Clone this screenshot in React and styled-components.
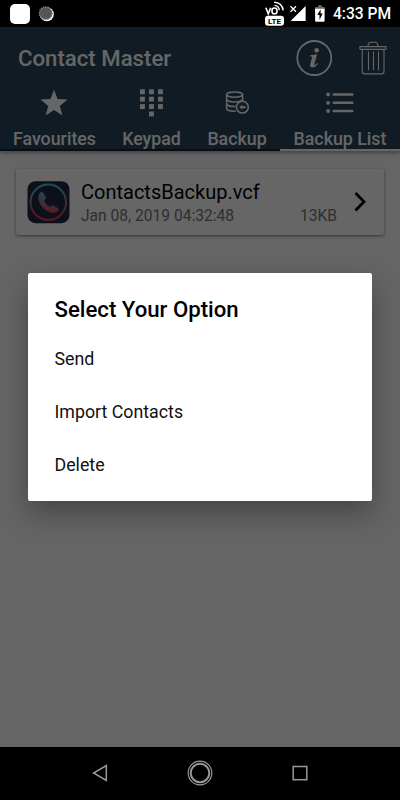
import { useState } from "react";
import styled, { createGlobalStyle } from "styled-components";

const GlobalStyle = createGlobalStyle`
  * {
    box-sizing: border-box;
  }

  body {
    margin: 0;
    background: #000;
    font-family: Roboto, "Liberation Sans", sans-serif;
  }
`;

const TABS = [
  { name: "Favourites", width: 109, icon: <StarIcon /> },
  { name: "Keypad", width: 85, icon: <KeypadIcon /> },
  { name: "Backup", width: 86, icon: <BackupIcon /> },
  { name: "Backup List", width: 120, icon: <ListIcon /> },
];

const OPTIONS = ["Send", "Import Contacts", "Delete"];

function StarIcon() {
  return (
    <svg width="30" height="28" viewBox="0 0 30 28">
      <path
        fill="currentColor"
        d="M14 .8l3.6 9.3 9.9.5-7.7 6.3 2.6 9.6L14 21.1l-8.4 5.4 2.6-9.6L.5 10.6l9.9-.5z"
      />
    </svg>
  );
}

function KeypadIcon() {
  const dots = [];
  for (let row = 0; row < 3; row++) {
    for (let col = 0; col < 3; col++) {
      dots.push([col * 9, row * 7.4]);
    }
  }
  dots.push([9, 22.2]);
  return (
    <svg width="23" height="28" viewBox="0 0 23 28">
      {dots.map(([x, y]) => (
        <rect key={`${x}-${y}`} x={x} y={y + 0.3} width="4.9" height="4.9" fill="currentColor" />
      ))}
    </svg>
  );
}

function BackupIcon() {
  return (
    <svg width="24" height="24" viewBox="0 0 24 24" fill="none" stroke="currentColor" strokeWidth="1.5">
      <ellipse cx="9.6" cy="3.6" rx="8" ry="2.7" />
      <path d="M1.600 3.600v14c0 1.500 3.700 2.700 8 2.700h1.200M17.600 3.600v6" />
      <path d="M1.600 8.200c0 1.500 3.700 2.700 8 2.700s8-1.200 8-2.700" />
      <path d="M1.600 12.900c0 1.500 3.700 2.700 8 2.700h1" />
      <circle cx="17.4" cy="16.200" r="5.900" />
      <path d="M20.600 16.200h-4" strokeWidth="2" />
      <path d="M17.300 13.800v4.800l-3-2.400z" fill="currentColor" stroke="none" />
    </svg>
  );
}

function ListIcon() {
  return (
    <svg width="28" height="22" viewBox="0 0 28 22">
      {[2.5, 10.8, 19].map((y) => (
        <g key={y} fill="currentColor">
          <circle cx="2.1" cy={y} r="1.9" />
          <rect x="6.5" y={y - 1.3} width="21" height="2.6" rx="1.2" />
        </g>
      ))}
    </svg>
  );
}

function InfoIcon() {
  return (
    <svg width="36" height="36" viewBox="0 0 36 36">
      <circle cx="18.3" cy="18" r="17" fill="none" stroke="currentColor" strokeWidth="1.8" />
      <circle cx="20.7" cy="10.2" r="2.3" fill="currentColor" />
      <path
        fill="currentColor"
        d="M14.200 15.300l6.900-1-2.700 9.800c-.3 1.200.2 1.400.8.900l2-2 .8.600c-1.700 2.600-3.400 4-5.400 4-2.200 0-3-1.400-2.400-3.600l1.700-6.200c.2-.9 0-1.300-.7-1.300h-1.300z"
      />
    </svg>
  );
}

function TrashIcon() {
  return (
    <svg width="28" height="34" viewBox="0 0 28 34" fill="none" stroke="currentColor" strokeWidth="1.1">
      <path d="M9 5.2c0-2.800 1.200-4 3-4h4c1.800 0 3 1.200 3 4" />
      <rect x=".8" y="5.600" width="26.400" height="2.800" rx=".8" />
      <path d="M3.200 8.500v21.700c0 1.800 1 2.700 2.600 2.700h16.600c1.600 0 2.600-.9 2.600-2.700V8.500" />
      <path d="M9.500 10.500v18.700M14.500 10.500v18.700M19.500 10.500v18.700" />
    </svg>
  );
}

function AppLogo() {
  return (
    <svg width="43" height="43" viewBox="0 0 43 43">
      <defs>
        <linearGradient id="ring" gradientUnits="userSpaceOnUse" x1="0" y1="4" x2="0" y2="39">
          <stop offset="0" stopColor="#48c0da" />
          <stop offset=".5" stopColor="#8e7e9c" />
          <stop offset=".8" stopColor="#dc3a56" />
        </linearGradient>
      </defs>
      <rect x=".5" y=".2" width="42" height="42" rx="8" fill="#202a44" />
      <circle cx="21.3" cy="21.2" r="17.7" fill="none" stroke="url(#ring)" strokeWidth="2" />
      <path
        fill="url(#ring)"
        d="M12.500 12.200c1.500-1.500 3-1.900 3.900-.5l2.300 4.100c.5 1 .2 2-.6 2.600l-1 .9c1 3 3.200 5.300 6.100 6.500l1.500-1c.8-.6 1.700-.6 2.500-.1l4 2.500c1.200.8.8 1.800-.4 2.900-2.300 2.100-6 2.400-9.500.6-4.900-2.400-8.800-7.200-9.700-12-.4-2.500-.3-5.100.9-6.500z"
      />
    </svg>
  );
}

function StatusIcons() {
  return (
    <svg width="62" height="27" viewBox="0 0 62 27">
      <g fill="none" stroke="#fff" strokeWidth="1.6">
        <path d="M.9 7.800l2.400 6 2.400-6" />
        <rect x="7" y="8" width="5" height="5.700" rx="2.300" />
        <path d="M9.500 5.400q4.300.2 4.900 4.800M9.200 2.200q8 .4 9 8.200" strokeWidth="1.400" />
      </g>
      <rect y="15.800" width="19" height="10" rx="3" fill="#fff" />
      <text x="9.500" y="23.700" textAnchor="middle" fontSize="8" fontWeight="700">
        LTE
      </text>
      <path fill="#fff" d="M40.600 6v15H25.600z" />
      <path fill="none" stroke="#000" strokeWidth="3.500" d="M31 5l-5.500 7" />
      <path fill="none" stroke="#fff" strokeWidth="1.300" d="M25.500 6.200l5.500 5.500M31 6.200l-5.500 5.500" />
      <path fill="#666" d="M53 5.200h4V7h2.600v5h-9.500V7H53z" />
      <path fill="#fff" d="M50.100 8.800h9.500v12a1 1 0 0 1-1 1h-7.500a1 1 0 0 1-1-1z" />
      <path fill="#000" d="M55.600 9.200l-3.300 5.700h2.200v5l3.200-6.300h-2.100z" />
    </svg>
  );
}

function App() {
  const [activeTab, setActiveTab] = useState("Backup List");

  return (
    <Phone>
      <GlobalStyle />
      <StatusBar>
        <Notices>
          <AppBadge />
          <svg width="16" height="16" viewBox="0 0 16 16">
            <circle cx="8.800" cy="8.300" r="7" fill="#fff" />
            <circle cx="7.800" cy="7.200" r="6.400" fill="#555" stroke="#888" strokeWidth="1.300" strokeDasharray="1.400 1" />
          </svg>
        </Notices>
        <StatusIcons />
        <Clock>4:33 PM</Clock>
      </StatusBar>

      <Screen>
        <Header>
          <Toolbar>
            <Title>Contact Master</Title>
            <InfoIcon />
            <TrashIcon />
          </Toolbar>
          <Tabs>
            {TABS.map((tab) => (
              <Tab
                key={tab.name}
                $width={tab.width}
                $active={tab.name === activeTab}
                onClick={() => setActiveTab(tab.name)}
              >
                <TabIcon>{tab.icon}</TabIcon>
                <TabName>{tab.name}</TabName>
              </Tab>
            ))}
          </Tabs>
        </Header>

        <FileCard>
          <AppLogo />
          <FileInfo>
            <FileName>ContactsBackup.vcf</FileName>
            <FileMeta>
              <span>Jan 08, 2019 04:32:48</span>
              <span>13KB</span>
            </FileMeta>
          </FileInfo>
          <svg width="14" height="22" viewBox="0 0 14 22">
            <path d="M2.500 2l8.500 8.700-8.500 8.700" fill="none" stroke="#000" strokeWidth="2.800" />
          </svg>
        </FileCard>

        <Overlay>
          <Dialog>
            <DialogTitle>Select Your Option</DialogTitle>
            {OPTIONS.map((option) => (
              <Option key={option}>{option}</Option>
            ))}
          </Dialog>
        </Overlay>
      </Screen>

      <NavBar>
        <svg width="16" height="18" viewBox="0 0 16 18">
          <path d="M14.300 1.600v14.800L1.600 9z" fill="none" stroke="#999" strokeWidth="1.500" />
        </svg>
        <svg width="26" height="26" viewBox="0 0 26 26" fill="none" stroke="#999">
          <circle cx="13" cy="13" r="11.800" strokeWidth="1.200" />
          <circle cx="13" cy="13" r="9.300" strokeWidth="2" />
        </svg>
        <svg width="16" height="16" viewBox="0 0 16 16">
          <rect x="1.200" y="1.500" width="13.600" height="13.200" fill="none" stroke="#999" strokeWidth="1.500" />
        </svg>
      </NavBar>
    </Phone>
  );
}

const Phone = styled.div`
  width: 400px;
  height: 800px;
  display: flex;
  flex-direction: column;
  overflow: hidden;
  background: #000;
`;

const StatusBar = styled.div`
  height: 27px;
  display: flex;
  align-items: center;
  padding: 0 9px 0 10px;
  color: #fff;
`;

const Notices = styled.div`
  flex: 1;
  display: flex;
  align-items: center;
  gap: 8px;
`;

const AppBadge = styled.span`
  width: 20px;
  height: 20px;
  border-radius: 5px;
  background: #fff;
`;

const Clock = styled.span`
  width: 58px;
  margin-left: 6px;
  padding-top: 2px;
  font-size: 15.6px;
  font-weight: 500;
  line-height: 27px;
  white-space: nowrap;
`;

const Screen = styled.main`
  position: relative;
  flex: 1;
  background: #fdfdfd;
`;

const Header = styled.header`
  height: 124px;
  background: #2a4458;
  color: #fff;
  box-shadow: 0 2px 4px rgba(0, 0, 0, 0.35);
`;

const Toolbar = styled.div`
  height: 62px;
  display: flex;
  align-items: center;
  padding: 0 13px 0 18px;

  svg:last-child {
    margin-left: 27px;
  }
`;

const Title = styled.h1`
  flex: 1;
  margin: 0;
  font-size: 22.2px;
  font-weight: 500;
`;

const Tabs = styled.nav`
  height: 62px;
  display: flex;
`;

const Tab = styled.button`
  width: ${(props) => props.$width}px;
  display: flex;
  flex-direction: column;
  align-items: center;
  padding: 0;
  border: 0;
  border-bottom: 2px solid ${(props) => (props.$active ? "#fff" : "#132140")};
  background: none;
  color: inherit;
  font-family: inherit;
`;

const TabIcon = styled.span`
  height: 28px;
  display: flex;
  align-items: center;
`;

const TabName = styled.span`
  margin-top: 11px;
  font-size: 17.8px;
  font-weight: 500;
  line-height: 21px;
  white-space: nowrap;
`;

const FileCard = styled.section`
  height: 66px;
  display: flex;
  align-items: center;
  margin: 18px 16px 0;
  padding: 0 17px 0 11px;
  border-radius: 2px;
  background: #fff;
  box-shadow: 0 1px 3px rgba(0, 0, 0, 0.5);
`;

const FileInfo = styled.div`
  flex: 1;
  margin: 0 16px 0 11px;
  padding-top: 2px;
`;

const FileName = styled.div`
  font-size: 20px;
  line-height: 25px;
  color: #000;
`;

const FileMeta = styled.div`
  display: flex;
  justify-content: space-between;
  font-size: 15.6px;
  line-height: 22px;
  color: #757575;
`;

const Overlay = styled.div`
  position: absolute;
  inset: 0;
  display: flex;
  align-items: center;
  justify-content: center;
  padding-bottom: 1px;
  background: rgba(0, 0, 0, 0.6);
`;

const Dialog = styled.div`
  width: 344px;
  height: 228px;
  padding: 20px 26.5px 0;
  border-radius: 2px;
  background: #fff;
  box-shadow: 0 12px 28px rgba(0, 0, 0, 0.32);
`;

const DialogTitle = styled.h2`
  margin: 0 0 10px;
  font-size: 22.2px;
  font-weight: 500;
  line-height: 32px;
  color: #000;
`;

const Option = styled.div`
  height: 53.3px;
  font-size: 17.8px;
  line-height: 48px;
  color: #111;
`;

const NavBar = styled.footer`
  height: 53px;
  display: flex;
  align-items: center;
  justify-content: space-between;
  padding: 0 92px 1px;
`;

export default App;
